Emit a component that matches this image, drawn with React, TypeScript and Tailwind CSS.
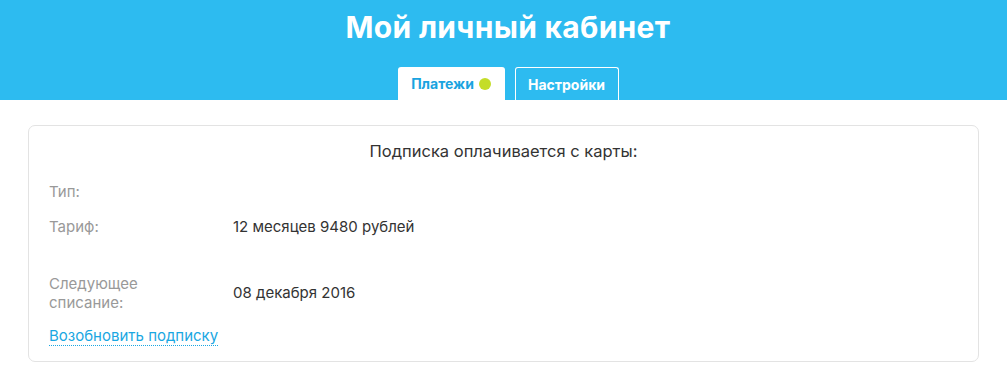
export default function App() {
  return (
    <div className="min-h-[372px] bg-white" style={{ fontFamily: "Inter, 'Noto Sans', sans-serif" }}>
      {/* Header */}
      <div className="bg-[#2dbbf0] h-[100px] pl-[9px] flex flex-col items-center">
        <h1 className="text-white font-bold text-[30px] tracking-[0.3px] leading-none mt-[12px]">Мой личный кабинет</h1>
        <div className="flex gap-[10px] mt-[25px] h-[33px]">
          <div className="bg-white rounded-t-[3px] w-[107px] justify-center flex items-center gap-[5px] text-[#1aa3e0] font-bold text-[14px]">
            Платежи
            <span className="w-[12px] h-[12px] rounded-full bg-[#c4dd28]"></span>
          </div>
          <div className="border border-b-0 border-white rounded-t-[3px] w-[104px] justify-center flex items-center text-white font-bold text-[14px]">
            Настройки
          </div>
        </div>
      </div>

      {/* Card */}
      <div className="px-[28px] pt-[25px] pb-[10px]">
        <div className="border border-[#e3e3e3] rounded-[7px] px-[20px] pt-[13px] pb-[14px]">
          <p className="text-center text-[#333] text-[16.5px]">Подписка оплачивается с карты:</p>
          <div className="mt-[18px] flex flex-col text-[15px]">
            <div className="flex h-[20px] items-center">
              <span className="w-[184px] text-[#999]">Тип:</span>
              <span className="text-[#333]"></span>
            </div>
            <div className="flex h-[20px] items-center mt-[15px]">
              <span className="w-[184px] text-[#999]">Тариф:</span>
              <span className="text-[#333]">12 месяцев 9480 рублей</span>
            </div>
            <div className="flex items-center mt-[37px]">
              <span className="w-[184px] text-[#999] leading-[19px]">Следующее<br />списание:</span>
              <span className="text-[#333]">08 декабря 2016</span>
            </div>
            <div className="mt-[13px]">
              <a className="text-[#1aa7e2] text-[15px] border-b border-dotted border-[#1aa7e2] leading-[18px] inline-block">
                Возобновить подписку
              </a>
            </div>
          </div>
        </div>
      </div>
    </div>
  );
}
